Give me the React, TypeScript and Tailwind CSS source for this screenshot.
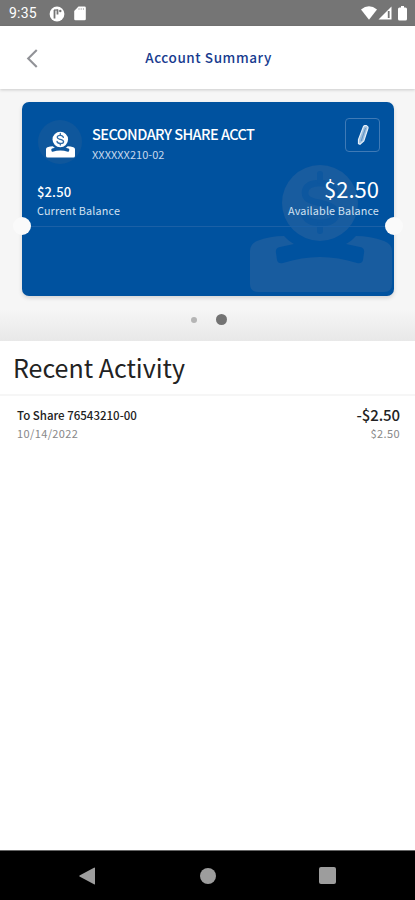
import React from "react";

function DepositGlyph({ className, cut }: { className: string; cut: string }) {
  return (
    <svg viewBox="0 0 142 130" className={className} fill="currentColor">
      <circle cx="70" cy="40" r="38" />
      <g fill="none" stroke={cut} strokeWidth="6.5" strokeLinecap="round">
        <path d="M85 30C83 22 77 20 70 20C61 20 55 23 55 30C55 37 62 38 70 40C78 42 86 44 86 51C86 57 79 60 70 60C62 60 55 57 54 50" />
        <path d="M70 11V18M70 62V68" strokeWidth="6" />
      </g>
      <path d="M7 78Q20 73 34 73C37 76 40 79 44 81L30 84Q25 85 26 90L27 97Q28 101 33 100C58 92 82 92 107 100Q112 101 113 97L114 90Q115 85 110 84L96 81C100 79 103 76 106 73Q120 73 134 78Q142 81 142 88V121Q142 129 134 129H8Q0 129 0 121V88Q0 81 7 78Z" />
    </svg>
  );
}

function StatusBar() {
  return (
    <div className="flex h-[26px] items-center bg-[#757575] text-white">
      <span className="ml-[9px] w-[30px] whitespace-nowrap font-[Roboto] text-[14px] leading-[28px] tracking-[0.2px]">9:35</span>
      <svg viewBox="0 0 16 16" className="ml-[10px] mt-[2px] h-[16px] w-[16px]">
        <circle cx="8" cy="8" r="7.4" fill="#fff" />
        <path d="M5.500 12.500V4M8.500 3.500V8.500" fill="none" stroke="#757575" strokeWidth="1.800" />
        <path d="M5 4H9" stroke="#757575" strokeWidth="1.200" />
        <circle cx="11.300" cy="5" r="1.200" fill="#757575" />
      </svg>
      <svg viewBox="0 0 12 15" className="ml-[9px] mt-[1px] h-[15px] w-[12px]">
        <path d="M4.500 .5H10.500Q11.800 .5 11.800 1.800V13Q11.800 14.300 10.500 14.300H1.500Q.2 14.300 .2 13V5Z" fill="#fff" />
        <path d="M5 2V4M7.200 2V4M9.400 2V4" stroke="#bbb" strokeWidth="1" />
      </svg>
      <div className="ml-auto mr-[8px] flex items-center">
        <svg viewBox="0 0 16 14" className="h-[14px] w-[16px]">
          <path d="M0 3.600Q8-3.200 16 3.600L8 13.800Z" fill="#fff" />
        </svg>
        <svg viewBox="0 0 14 14" className="ml-[1px] h-[14px] w-[14px]">
          <path d="M13.500 .5V13.500H.5Z" fill="#fff" />
          <path d="M10.700 5V12" stroke="#757575" strokeWidth="1.800" />
        </svg>
        <svg viewBox="0 0 9 15" className="ml-[6px] h-[15px] w-[9px]">
          <path d="M3 0H6V1.500H7.500Q9 1.500 9 3V13Q9 14.500 7.500 14.500H1.500Q0 14.500 0 13V3Q0 1.500 1.500 1.500H3Z" fill="#fff" />
        </svg>
      </div>
    </div>
  );
}

function Header() {
  return (
    <header className="relative z-10 flex h-[63px] items-center justify-center bg-white shadow-[0_1px_3px_rgba(0,0,0,0.18)]">
      <svg viewBox="0 0 12 20" className="absolute left-[26px] top-[23px] h-[19px] w-[12px]" fill="none" stroke="#919297" strokeWidth="2.2">
        <path d="M11 1L2 10L11 19" />
      </svg>
      <h1 className="pl-[2px] text-[13.500px] font-medium tracking-[0.570px] text-[#173b8f]">Account Summary</h1>
    </header>
  );
}

function AccountCard() {
  return (
    <section className="relative ml-[22px] h-[194px] w-[372px] rounded-[7px] bg-[#00529f] text-white shadow-[0_2px_4px_rgba(0,0,0,0.14)]">
      <DepositGlyph className="absolute left-[228px] top-[61px] h-[130px] w-[142px] text-[#185c9f]" cut="#0d579f" />
      <div className="relative flex h-[82px] pl-[16px] pt-[18px]">
        <div className="flex h-[44px] w-[44px] justify-center rounded-full bg-[#0f579c] pt-[11px]">
          <DepositGlyph className="h-[27px] w-[29px]" cut="#2f6ca8" />
        </div>
        <div className="ml-[10px] pt-[4px]">
          <h2 className="whitespace-nowrap text-[14.500px] font-medium leading-[20px] tracking-[-0.550px]">SECONDARY SHARE ACCT</h2>
          <p className="text-[11px] leading-[20px] tracking-[0.020px] text-[#c5d8ed]">XXXXXX210-02</p>
        </div>
        <button className="ml-auto mr-[14px] mt-[-2px] flex h-[34px] w-[35px] items-center justify-center rounded-[4px] border border-[#3f7ab6]">
          <svg viewBox="0 0 12 20" className="h-[20px] w-[12px]" fill="#9bbddd" stroke="#e5eff9" strokeWidth="1.200">
            <path d="M6.500 1.500Q7.500 .2 9.500 .7Q11.300 1.300 11 3L6.800 16L3 19.200L1.500 18.500V14.500Z" />
            <path d="M8.500 3L4.200 16" stroke="#5088bd" strokeWidth=".8" />
          </svg>
        </button>
      </div>
      <div className="relative flex h-[43px] justify-between border-b border-[#1b60a6] px-[15px]">
        <div>
          <p className="text-[13px] font-medium leading-[16px] tracking-[0.150px]">$2.50</p>
          <p className="text-[10.800px] leading-[21px] tracking-[0.150px] text-[#d2e1f1]">Current Balance</p>
        </div>
        <div className="mt-[-9px] text-right">
          <p className="text-[22px] leading-[26px]">$2.50</p>
          <p className="text-[10.800px] leading-[19px] tracking-[0.150px] text-[#d2e1f1]">Available Balance</p>
        </div>
      </div>
      <i className="absolute left-[-9px] top-[115px] h-[18px] w-[18px] rounded-full bg-[#fafafa]" />
      <i className="absolute right-[-9px] top-[115px] h-[18px] w-[18px] rounded-full bg-[#fafafa]" />
    </section>
  );
}

export default function App() {
  return (
    <div className="flex h-[900px] w-[415px] flex-col overflow-hidden bg-white font-['Noto_Sans_CJK_SC',sans-serif]">
      <StatusBar />
      <Header />
      <main className="flex flex-1 flex-col">
        <div className="h-[252px] bg-[linear-gradient(#f6f6f6_0px,#f6f6f6_220px,#e8e8e8_252px)] pt-[13px]">
          <AccountCard />
          <div className="flex h-[47px] items-center pl-[191px]">
            <span className="h-[6px] w-[6px] rounded-full bg-[#b5b5b5]" />
            <span className="ml-[19px] h-[11px] w-[11px] rounded-full bg-[#737373]" />
          </div>
        </div>
        <h2 className="h-[55px] border-b-2 border-[#f6f6f6] pl-[13px] text-[25px] font-normal leading-[53px] text-[#222]">Recent Activity</h2>
        <div className="flex justify-between pl-[17px] pr-[15px] pt-[9px]">
          <div>
            <p className="text-[11.500px] font-medium leading-[20px] text-[#222]">To Share 76543210-00</p>
            <p className="text-[11px] leading-[17px] tracking-[0.380px] text-[#888]">10/14/2022</p>
          </div>
          <div className="text-right">
            <p className="text-[15px] font-medium leading-[20px] tracking-[-0.100px] text-[#222]">-$2.50</p>
            <p className="text-[11px] leading-[17px] tracking-[0.380px] text-[#888]">$2.50</p>
          </div>
        </div>
      </main>
      <nav className="flex h-[50px] items-center border-t border-[#666] bg-black">
        <svg viewBox="0 0 16 18" className="ml-[79px] h-[18px] w-[16px] fill-[#9d9d9d]">
          <path d="M15 .8Q16 .2 16 1V17Q16 17.800 15 17.200L.5 9.500Q0 9 .5 8.500Z" />
        </svg>
        <span className="ml-[105px] h-[16px] w-[16px] rounded-full bg-[#9d9d9d]" />
        <span className="ml-[103px] h-[17px] w-[17px] rounded-[2px] bg-[#9d9d9d]" />
      </nav>
    </div>
  );
}
